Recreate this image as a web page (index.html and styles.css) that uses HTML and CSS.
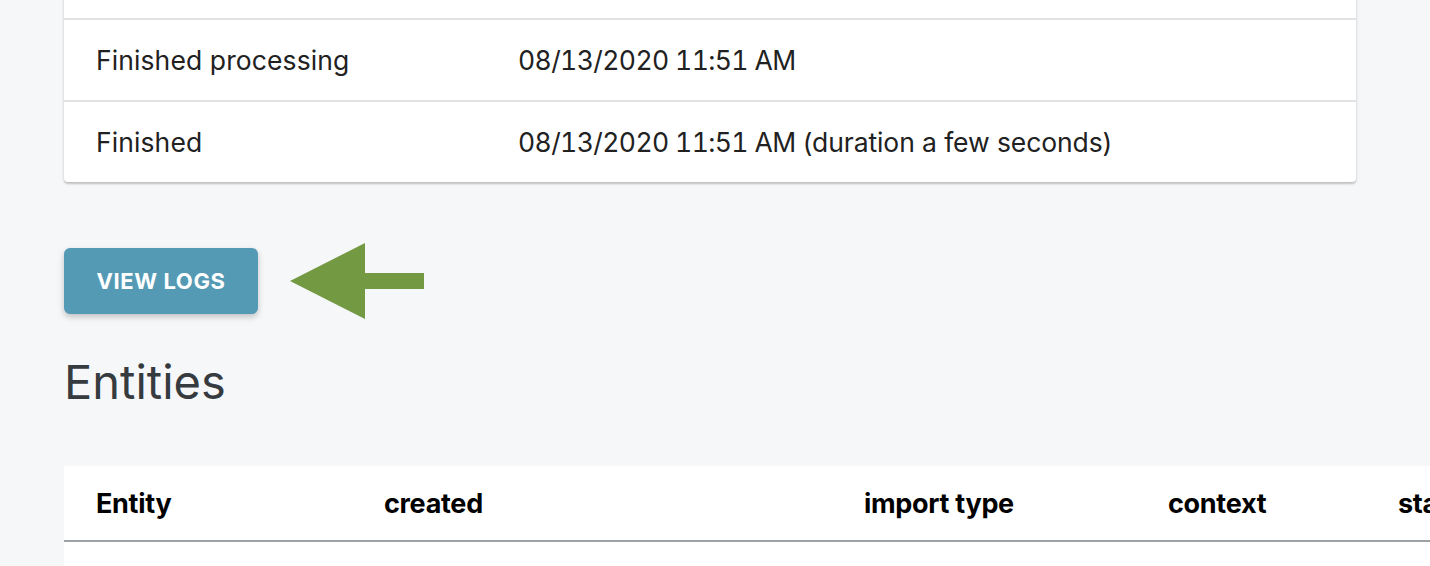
FILE: index.html
```html
<!DOCTYPE html>
<html lang="en">
<head>
<meta charset="utf-8">
<title>Import details</title>
<link rel="stylesheet" href="styles.css">
</head>
<body>
<main class="page">
  <section class="card">
    <div class="row"><span class="label">Started processing</span><span class="value"><time class="date">08/13/2020 11:51 AM</time></span></div>
    <div class="row"><span class="label">Finished processing</span><span class="value"><time class="date">08/13/2020 11:51 AM</time></span></div>
    <div class="row"><span class="label">Finished</span><span class="value"><time class="date">08/13/2020 11:51 AM</time> (duration a few seconds)</span></div>
  </section>

  <div class="actions">
    <button class="btn">View logs</button>
    <svg class="arrow" width="134" height="76" viewBox="0 0 134 76" aria-hidden="true">
      <polygon points="0,38 75,0 75,30 134,30 134,46 75,46 75,76" fill="#739a43"/>
    </svg>
  </div>

  <h2 class="heading">Entities</h2>

  <table class="entities">
    <thead>
      <tr>
        <th class="c1">Entity</th>
        <th class="c2">created</th>
        <th class="c3">import type</th>
        <th class="c4">context</th>
        <th class="c5">status</th>
      </tr>
    </thead>
    <tbody>
      <tr><td colspan="5"></td></tr>
    </tbody>
  </table>
</main>
</body>
</html>
```
FILE: styles.css
```css
html, body {
  margin: 0;
  padding: 0;
  background: #f6f7f9;
  overflow: hidden;
  height: 566px;
}
body {
  font-family: Inter, "Noto Sans", "Liberation Sans", sans-serif;
  color: #212121;
}
.page {
  padding-left: 64px;
}
.card {
  width: 1292px;
  margin-top: -62px;
  background: #fff;
  border-radius: 0 0 4px 4px;
  box-shadow: 0 2px 2px rgba(0,0,0,0.18), 0 1px 4px rgba(0,0,0,0.08);
}
.row {
  display: flex;
  align-items: center;
  height: 80px;
  padding-left: 32px;
  font-size: 26.5px;
  letter-spacing: 0.1px;
  border-bottom: 2px solid #e2e2e2;
}
.row:last-child {
  border-bottom: none;
}
.label {
  width: 422px;
}
.value {
  letter-spacing: -0.1px;
}
.date {
  font-variant-numeric: tabular-nums;
  letter-spacing: -0.6px;
}
.actions {
  display: flex;
  align-items: center;
  gap: 32px;
  margin-top: 61px;
}
.btn {
  height: 66px;
  width: 194px;
  border: none;
  border-radius: 6px;
  background: #559ab5;
  color: #fff;
  font-family: Inter, "Noto Sans", "Liberation Sans", sans-serif;
  font-weight: 700;
  font-size: 22px;
  letter-spacing: 0.6px;
  text-transform: uppercase;
  box-shadow: 0 3px 6px rgba(0,0,0,0.22);
  padding: 0;
}
.arrow {
  display: block;
}
.heading {
  margin: 31px 0 0;
  font-size: 47px;
  font-weight: 400;
  color: #363b40;
  line-height: 64px;
}
.entities {
  margin-top: 52px;
  width: 1700px;
  border-collapse: collapse;
  background: #fff;
}
.entities th {
  text-align: left;
  font-size: 27px;
  font-weight: 700;
  color: #000;
  height: 74px;
  padding: 0 0 0 32px;
  border-bottom: 2px solid #9ca1a6;
  letter-spacing: -0.3px;
}
.entities .c1 { width: 256px; }
.entities .c2 { width: 448px; }
.entities .c3 { width: 272px; }
.entities .c4 { width: 198px; }
.entities td {
  height: 60px;
}
```
